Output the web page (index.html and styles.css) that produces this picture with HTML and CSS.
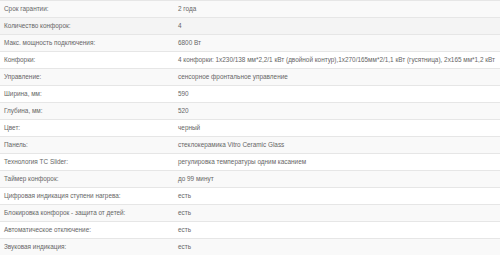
FILE: index.html
```html
<!DOCTYPE html>
<html lang="ru">
<head>
<meta charset="utf-8">
<link rel="stylesheet" href="styles.css">
</head>
<body>
<table class="specs">
<colgroup><col class="col-label"><col class="col-value"></colgroup>
<tbody>
<tr class="odd"><td>Срок гарантии:</td><td>2 года</td></tr>
<tr class="hover"><td>Количество конфорок:</td><td>4</td></tr>
<tr class="odd"><td>Макс. мощность подключения:</td><td>6800 Вт</td></tr>
<tr><td>Конфорки:</td><td>4 конфорки: 1x230/138 мм*2,2/1 кВт (двойной контур),1x270/165мм*2/1,1 кВт (гусятница), 2x165 мм*1,2 кВт</td></tr>
<tr class="odd"><td>Управление:</td><td>сенсорное фронтальное управление</td></tr>
<tr><td>Ширина, мм:</td><td>590</td></tr>
<tr class="odd"><td>Глубина, мм:</td><td>520</td></tr>
<tr><td>Цвет:</td><td>черный</td></tr>
<tr class="odd"><td>Панель:</td><td>стеклокерамика Vitro Ceramic Glass</td></tr>
<tr><td>Технология TC Slider:</td><td>регулировка температуры одним касанием</td></tr>
<tr class="odd"><td>Таймер конфорок:</td><td>до 99 минут</td></tr>
<tr><td>Цифровая индикация ступени нагрева:</td><td>есть</td></tr>
<tr class="odd"><td>Блокировка конфорок - защита от детей:</td><td>есть</td></tr>
<tr><td>Автоматическое отключение:</td><td>есть</td></tr>
<tr class="odd"><td>Звуковая индикация:</td><td>есть</td></tr>
</tbody>
</table>
</body>
</html>
```
FILE: styles.css
```css
html, body {
  margin: 0;
  padding: 0;
  background: #fff;
}
.specs {
  width: 500px;
  table-layout: fixed;
  border-collapse: collapse;
  font-family: "Liberation Sans", Arial, sans-serif;
  font-size: 6.4px;
  color: #666;
}
.col-label {
  width: 174px;
}
.specs td {
  border-top: 1px solid #e6e6e6;
  height: 16px;
  padding: 0 4px;
  line-height: 16px;
  white-space: nowrap;
  overflow: hidden;
  vertical-align: middle;
}
.specs tr.odd td {
  background: #f9f9f9;
}
.specs tr.hover td {
  background: #f4f4f4;
}
```
